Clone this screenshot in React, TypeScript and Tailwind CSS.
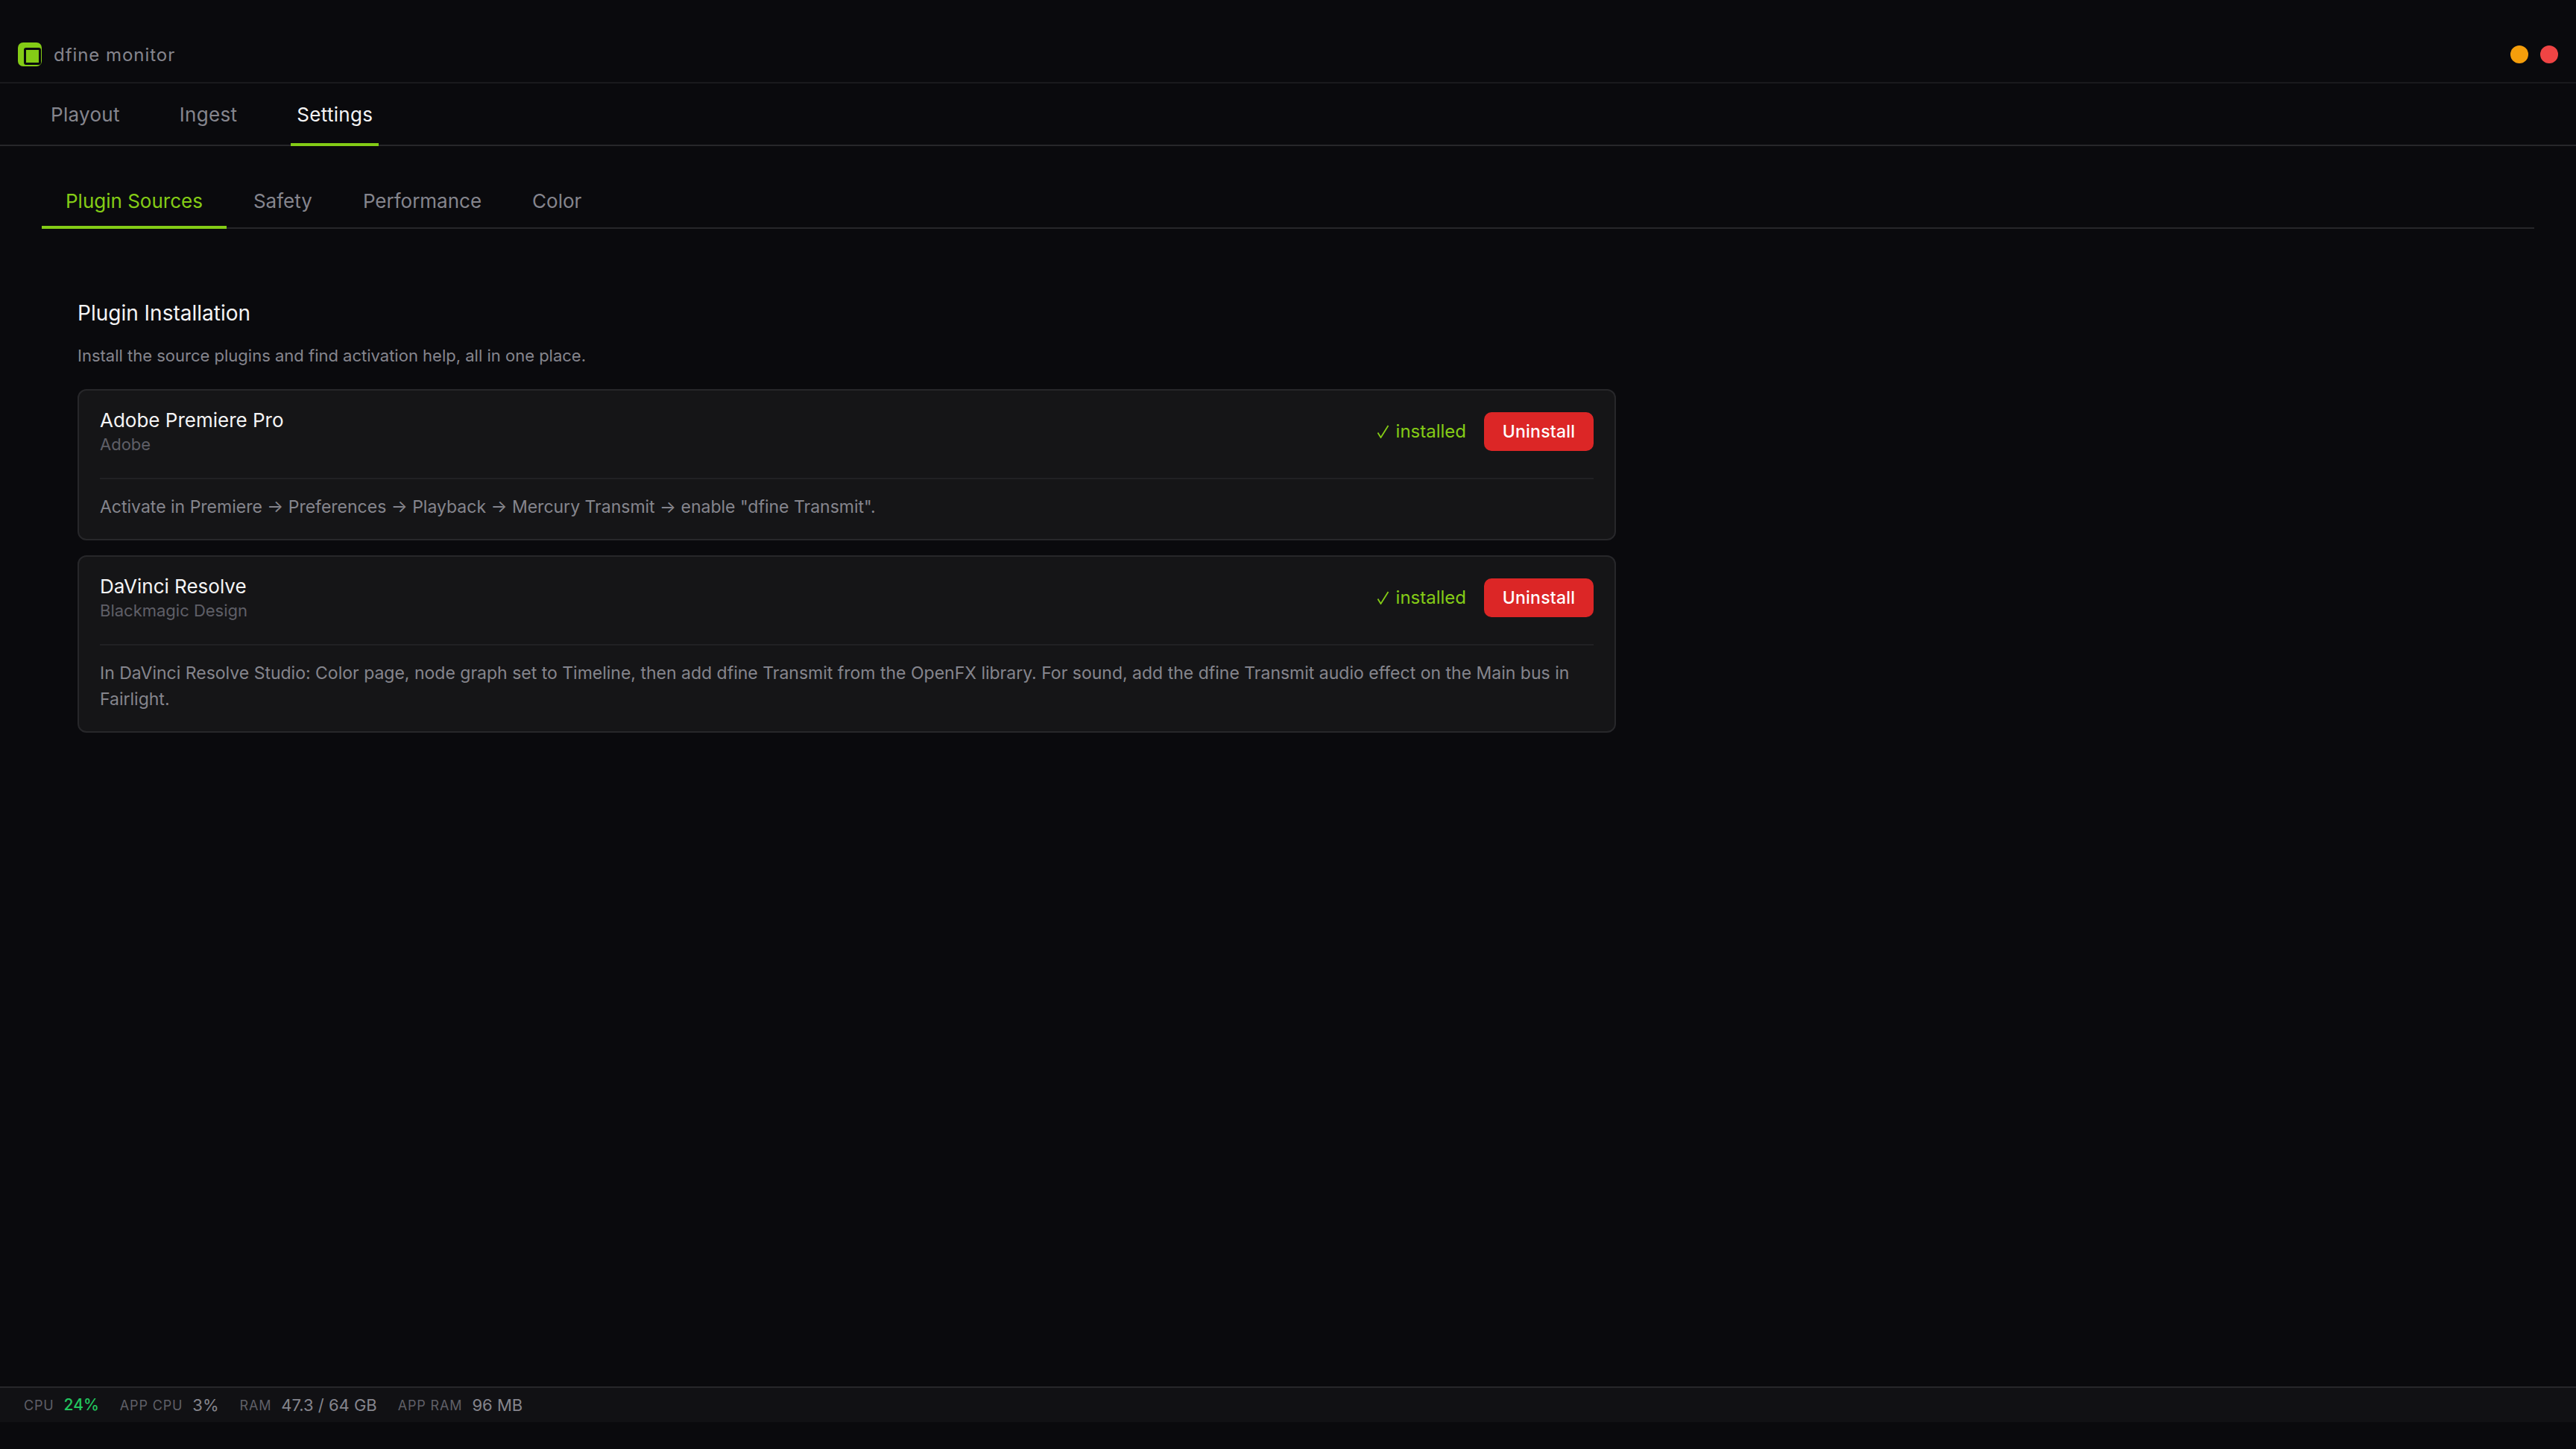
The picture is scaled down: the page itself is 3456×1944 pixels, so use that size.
const mainTabs = ['Playout', 'Ingest', 'Settings'];
const subTabs = ['Plugin Sources', 'Safety', 'Performance', 'Color'];

const plugins = [
  {
    name: 'Adobe Premiere Pro',
    vendor: 'Adobe',
    help: 'Activate in Premiere → Preferences → Playback → Mercury Transmit → enable "dfine Transmit".',
  },
  {
    name: 'DaVinci Resolve',
    vendor: 'Blackmagic Design',
    help: 'In DaVinci Resolve Studio: Color page, node graph set to Timeline, then add dfine Transmit from the OpenFX library. For sound, add the dfine Transmit audio effect on the Main bus in Fairlight.',
  },
];

const stats = [
  { label: 'CPU', value: '24%', accent: true },
  { label: 'APP CPU', value: '3%' },
  { label: 'RAM', value: '47.3 / 64 GB' },
  { label: 'APP RAM', value: '96 MB' },
];

function Logo() {
  return (
    <svg width="32" height="32" viewBox="0 0 32 32" className="shrink-0">
      <rect width="32" height="32" rx="7" fill="#84cc16" />
      <rect x="9.5" y="8.5" width="20" height="20" rx="1.5" fill="#84cc16" stroke="#0a0a0d" strokeWidth="3" />
    </svg>
  );
}

function Check() {
  return (
    <svg width="17" height="18" viewBox="0 0 17 18" fill="none" className="shrink-0">
      <path d="M1.5 10.5 L5.5 17 L15.5 1" stroke="#84cc16" strokeWidth="1.8" />
    </svg>
  );
}

function PluginCard({ name, vendor, help }: { name: string; vendor: string; help: string }) {
  return (
    <div className="rounded-xl border-2 border-[#27272a] bg-[#151517] px-7 pt-[23px] pb-[25px]">
      <div className="flex items-center justify-between border-b-2 border-[#212124] pb-[30px]">
        <div>
          <div className="text-[26px] leading-[33px] text-[#f4f4f5]">{name}</div>
          <div className="mt-px text-[22px] leading-[30px] text-[#5f5f67]">{vendor}</div>
        </div>
        <div className="flex items-center gap-6">
          <span className="flex items-center gap-[9px] text-[24px] text-[#84cc16]">
            <Check />
            installed
          </span>
          <button className="h-[52px] w-[147px] rounded-[10px] bg-[#dc2626] text-[23px] font-medium tracking-[0.2px] text-white">
            Uninstall
          </button>
        </div>
      </div>
      <p className="mt-5 text-[23px] leading-[35px] text-[#85858d]">{help}</p>
    </div>
  );
}

export default function App() {
  return (
    <div className="flex h-screen flex-col bg-[#0a0a0d] font-['Inter',sans-serif]">
      {/* Title bar */}
      <div className="flex h-[112px] shrink-0 items-center justify-between border-b-2 border-[#1a1a1d] px-6 pt-[36px]">
        <div className="flex items-center gap-4">
          <Logo />
          <span className="pt-px text-[24px] tracking-[0.95px] text-[#85858d]">dfine monitor</span>
        </div>
        <div className="flex items-center gap-4">
          <span className="size-6 rounded-full bg-[#f59e0b]" />
          <span className="size-6 rounded-full bg-[#ef4444]" />
        </div>
      </div>

      {/* Main tabs */}
      <div className="flex h-[84px] shrink-0 gap-16 border-b-2 border-[#27272a] pl-[60px]">
        {mainTabs.map((tab) => (
          <button
            key={tab}
            className={
              tab === 'Settings'
                ? '-mb-[2px] h-[84px] border-b-4 border-[#84cc16] px-2 pt-0.5 text-[26px] tracking-[0.3px] text-[#f4f4f5]'
                : '-mb-[2px] h-[84px] border-b-4 border-transparent px-2 pt-0.5 text-[26px] tracking-[0.3px] text-[#85858d]'
            }
          >
            {tab}
          </button>
        ))}
      </div>

      {/* Settings */}
      <div className="flex-1 px-14 pt-[36px]">
        <div className="flex h-[75px] gap-1 border-b-2 border-[#27272a]">
          {subTabs.map((tab) => (
            <button
              key={tab}
              className={
                tab === 'Plugin Sources'
                  ? '-mb-[2px] h-[75px] border-b-4 border-[#84cc16] px-8 pt-1 text-[26px] text-[#84cc16]'
                  : '-mb-[2px] h-[75px] border-b-4 border-transparent px-8 pt-1 text-[26px] text-[#85858d]'
              }
            >
              {tab}
            </button>
          ))}
        </div>

        <div className="w-[2112px] pt-[94px] pl-12">
          <h2 className="text-[28px] leading-[38px] text-[#f4f4f5]">Plugin Installation</h2>
          <p className="mt-5 text-[22px] leading-[36px] text-[#85858d]">
            Install the source plugins and find activation help, all in one place.
          </p>
          <div className="mt-[27px] flex flex-col gap-5">
            {plugins.map((plugin) => (
              <PluginCard key={plugin.name} {...plugin} />
            ))}
          </div>
        </div>
      </div>

      {/* Status bar */}
      <div className="mb-9 flex h-[48px] shrink-0 items-center gap-7 border-t-2 border-[#27272a] bg-[#111114] px-8">
        {stats.map((stat) => (
          <div key={stat.label} className="flex items-center gap-[13px]">
            <span className="text-[18px] tracking-[0.85px] text-[#5f5f67]">{stat.label}</span>
            <span className={stat.accent ? 'text-[21px] font-medium text-[#22c55e]' : 'text-[22px] text-[#85858d]'}>
              {stat.value}
            </span>
          </div>
        ))}
      </div>
    </div>
  );
}
